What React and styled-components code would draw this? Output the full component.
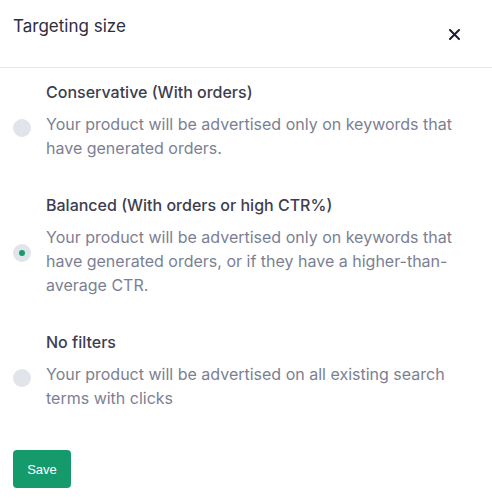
import React, { useState } from 'react';
import styled, { createGlobalStyle } from 'styled-components';

const GlobalStyle = createGlobalStyle`
  html, body {
    margin: 0;
    padding: 0;
    background: #ffffff;
  }
  body {
    font-family: Inter, "Noto Sans", sans-serif;
  }
`;

const Modal = styled.div`
  width: 492px;
  display: flex;
  flex-direction: column;
  color: #2d2d3f;
`;

const Header = styled.div`
  height: 68px;
  box-sizing: border-box;
  display: flex;
  justify-content: space-between;
  padding: 14px 28px 0 13px;
  border-bottom: 1px solid #e8e9ee;
`;

const Title = styled.div`
  font-size: 17px;
  line-height: 24px;
  font-weight: 400;
  color: #2d2d3f;
`;

const Close = styled.button`
  border: none;
  background: none;
  padding: 0;
  margin-top: 10px;
  width: 20px;
  height: 20px;
  display: flex;
  align-items: center;
  justify-content: center;
  color: #1f1f33;
  cursor: pointer;
`;

const Body = styled.div`
  display: flex;
  flex-direction: column;
  gap: 17px;
  padding: 12px 13px 0 13px;
`;

const Option = styled.label`
  display: flex;
  align-items: center;
  gap: 15px;
  cursor: pointer;
`;

const Radio = styled.span`
  flex: none;
  width: 18px;
  height: 18px;
  border-radius: 50%;
  background: #e1e4eb;
  display: flex;
  align-items: center;
  justify-content: center;
  &::after {
    content: '';
    width: 6px;
    height: 6px;
    border-radius: 50%;
    background: ${(props) => (props.checked ? '#159a6c' : 'transparent')};
  }
`;

const Content = styled.div`
  display: flex;
  flex-direction: column;
  gap: 8px;
  padding-bottom: 16px;
`;

const Heading = styled.div`
  font-size: 16px;
  line-height: 24px;
  font-weight: 500;
  color: #3d3d50;
`;

const Description = styled.div`
  font-size: 16px;
  line-height: 24px;
  color: #7c7f93;
  max-width: 420px;
`;

const Footer = styled.div`
  padding: 24px 13px 10px 13px;
`;

const SaveButton = styled.button`
  width: 58px;
  height: 38px;
  border: none;
  border-radius: 4px;
  background: #159a6c;
  color: #ffffff;
  font-family: "Liberation Sans", Arial, sans-serif;
  font-size: 13px;
  cursor: pointer;
`;

const OPTIONS = [
    {
        id: 'conservative',
        title: 'Conservative (With orders)',
        text: 'Your product will be advertised only on keywords that have generated orders.',
    },
    {
        id: 'balanced',
        title: 'Balanced (With orders or high CTR%)',
        text: 'Your product will be advertised only on keywords that have generated orders, or if they have a higher-than-average CTR.',
    },
    {
        id: 'none',
        title: 'No filters',
        text: 'Your product will be advertised on all existing search terms with clicks',
    },
];

function App() {
    const [selected, setSelected] = useState('balanced');

    return (
        <Modal>
            <GlobalStyle />
            <Header>
                <Title>Targeting size</Title>
                <Close aria-label="Close">
                    <svg width="11" height="11" viewBox="0 0 11 11">
                        <path d="M1 1L10 10M10 1L1 10" stroke="currentColor" strokeWidth="2" strokeLinecap="round" />
                    </svg>
                </Close>
            </Header>
            <Body>
                {OPTIONS.map((option) => (
                    <Option key={option.id} onClick={() => setSelected(option.id)}>
                        <Radio checked={selected === option.id} />
                        <Content>
                            <Heading>{option.title}</Heading>
                            <Description>{option.text}</Description>
                        </Content>
                    </Option>
                ))}
            </Body>
            <Footer>
                <SaveButton>Save</SaveButton>
            </Footer>
        </Modal>
    );
}

export default App;
